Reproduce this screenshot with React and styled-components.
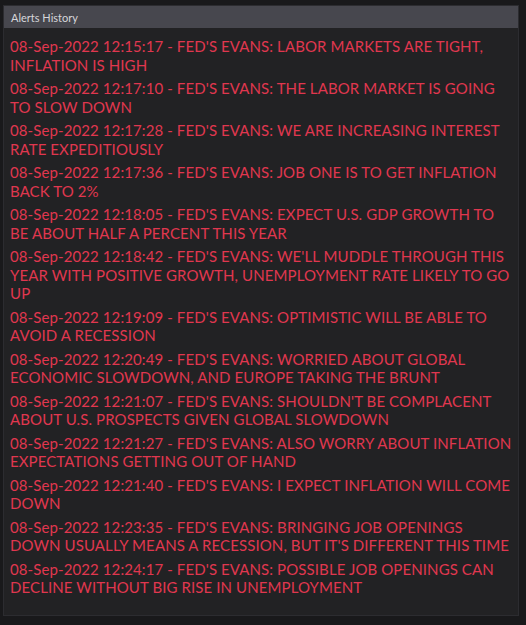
import React from "react";
import styled, { createGlobalStyle } from "styled-components";

// Estilos globais da página
const GlobalStyle = createGlobalStyle`
  html, body {
    margin: 0;
    padding: 0;
    background-color: #19191b;
  }
  #root {
    padding: 5px 7px 7px 3px;
  }
`;

const Panel = styled.div`
  background-color: #222224;
  border: 1px solid #2c2c30;
  height: 611px;
  box-sizing: border-box;
  display: flex;
  flex-direction: column;
  font-family: Lato, "Open Sans", sans-serif;
`;

const Header = styled.div`
  background-color: #47474e;
  height: 22px;
  display: flex;
  align-items: center;
  padding-left: 7px;
  color: #d6d6da;
  font-size: 11px;
`;

const List = styled.div`
  display: flex;
  flex-direction: column;
  gap: 5px;
  padding: 9px 3px 0 6px;
`;

const Alert = styled.div`
  color: #e0374f;
  font-size: 15px;
  letter-spacing: 0.1px;
  line-height: 18.5px;
`;

const alerts = [
  ["12:15:17", "LABOR MARKETS ARE TIGHT, INFLATION IS HIGH"],
  ["12:17:10", "THE LABOR MARKET IS GOING TO SLOW DOWN"],
  ["12:17:28", "WE ARE INCREASING INTEREST RATE EXPEDITIOUSLY"],
  ["12:17:36", "JOB ONE IS TO GET INFLATION BACK TO 2%"],
  ["12:18:05", "EXPECT U.S. GDP GROWTH TO BE ABOUT HALF A PERCENT THIS YEAR"],
  ["12:18:42", "WE'LL MUDDLE THROUGH THIS YEAR WITH POSITIVE GROWTH, UNEMPLOYMENT RATE LIKELY TO GO UP"],
  ["12:19:09", "OPTIMISTIC WILL BE ABLE TO AVOID A RECESSION"],
  ["12:20:49", "WORRIED ABOUT GLOBAL ECONOMIC SLOWDOWN, AND EUROPE TAKING THE BRUNT"],
  ["12:21:07", "SHOULDN'T BE COMPLACENT ABOUT U.S. PROSPECTS GIVEN GLOBAL SLOWDOWN"],
  ["12:21:27", "ALSO WORRY ABOUT INFLATION EXPECTATIONS GETTING OUT OF HAND"],
  ["12:21:40", "I EXPECT INFLATION WILL COME DOWN"],
  ["12:23:35", "BRINGING JOB OPENINGS DOWN USUALLY MEANS A RECESSION, BUT IT'S DIFFERENT THIS TIME"],
  ["12:24:17", "POSSIBLE JOB OPENINGS CAN DECLINE WITHOUT BIG RISE IN UNEMPLOYMENT"],
];

const App = () => {
  return (
    <>
      <GlobalStyle />
      <Panel>
        <Header>Alerts History</Header>
        <List>
          {alerts.map(([time, text], i) => (
            <Alert key={i}>
              08-Sep-2022 {time} - FED'S EVANS: {text}
            </Alert>
          ))}
        </List>
      </Panel>
    </>
  );
};

export default App;
